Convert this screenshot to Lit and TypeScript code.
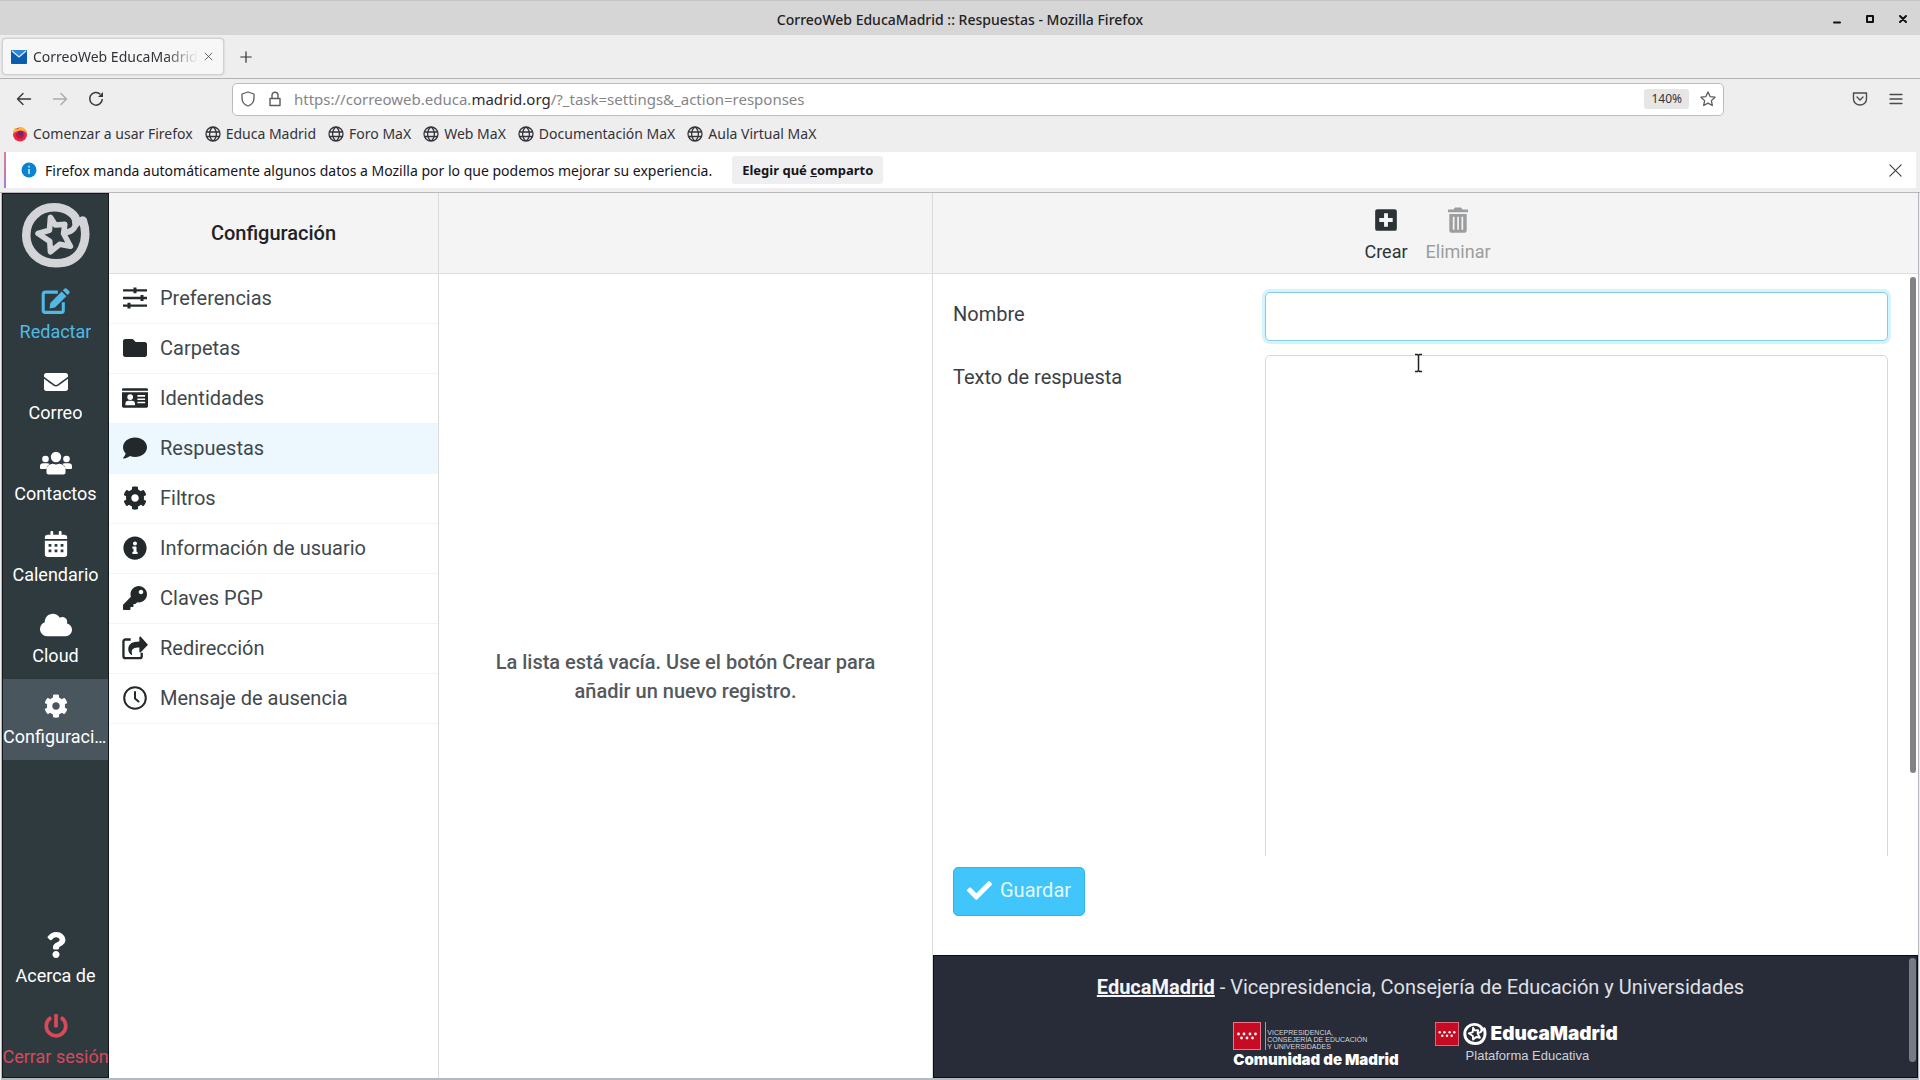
import { LitElement, html, svg, css, type TemplateResult } from "lit";
import { customElement } from "lit/decorators.js";
import { classMap } from "lit/directives/class-map.js";

const solid = (box: string, d: string) =>
  html`<svg viewBox=${box} fill="currentColor" aria-hidden="true"><path fill-rule="evenodd" d=${d}></path></svg>`;
const drawn = (box: string, body: unknown) =>
  html`<svg viewBox=${box} fill="currentColor" aria-hidden="true">${body}</svg>`;
const line = (box: string, d: string, width = 1.5) =>
  html`<svg viewBox=${box} fill="none" stroke="currentColor" stroke-width=${width} stroke-linecap="round" stroke-linejoin="round" aria-hidden="true"><path d=${d}></path></svg>`;

const COG =
  "M487.4 315.7l-42.6-24.6c4.3-23.2 4.3-47 0-70.2l42.6-24.6c4.9-2.8 7.1-8.6 5.5-14-11.1-35.6-30-67.8-54.7-94.6-3.8-4.1-10-5.1-14.8-2.3L380.8 110c-17.9-15.4-38.5-27.3-60.8-35.1V25.8c0-5.6-3.9-10.5-9.4-11.7-36.7-8.2-74.3-7.8-109.2 0-5.5 1.2-9.4 6.1-9.4 11.7V75c-22.2 7.9-42.8 19.8-60.8 35.1L88.7 85.5c-4.9-2.8-11-1.9-14.8 2.3-24.7 26.7-43.6 58.9-54.7 94.6-1.7 5.4.6 11.2 5.5 14L67.3 221c-4.3 23.2-4.3 47 0 70.2l-42.6 24.6c-4.9 2.8-7.1 8.6-5.5 14 11.1 35.6 30 67.8 54.7 94.6 3.8 4.1 10 5.1 14.8 2.3l42.6-24.6c17.9 15.4 38.5 27.3 60.8 35.1v49.2c0 5.6 3.9 10.5 9.4 11.7 36.7 8.2 74.3 7.8 109.2 0 5.5-1.2 9.4-6.1 9.4-11.7v-49.2c22.2-7.9 42.8-19.8 60.8-35.1l42.6 24.6c4.9 2.8 11 1.9 14.8-2.3 24.7-26.7 43.6-58.9 54.7-94.6 1.5-5.5-.7-11.3-5.6-14.1zM256 336c-44.1 0-80-35.9-80-80s35.9-80 80-80 80 35.9 80 80-35.9 80-80 80z";

const icons = {
  cog: solid("0 0 512 512", COG),
  edit: drawn("0 0 24 22", svg`
    <path d="M14 3.5H3.2A1.6 1.6 0 0 0 1.6 5.100V19a1.600 1.600 0 0 0 1.600 1.600H17a1.600 1.600 0 0 0 1.600-1.600V12" fill="none" stroke="currentColor" stroke-width="2.600"></path>
    <path d="M17.200 3l4 4L11.600 16.600l-4.600.700.600-4.700zM18.200 2l1.300-1.300a1.500 1.500 0 0 1 2.100 0l1.900 1.900a1.500 1.500 0 0 1 0 2.100L22.200 6z"></path>`),
  mail: solid("0 0 512 512", "M502.3 190.8c3.9-3.1 9.7-.2 9.7 4.7V400c0 26.5-21.5 48-48 48H48c-26.5 0-48-21.5-48-48V195.6c0-5 5.7-7.8 9.7-4.7 22.4 17.4 52.1 39.5 154.1 113.6 21.1 15.4 56.7 47.8 92.2 47.6 35.7.3 72-32.8 92.3-47.6 102-74.1 131.6-96.3 154-113.7zM256 320c23.2.4 56.600-29.200 73.400-41.400 132.700-96.300 142.800-104.700 173.400-128.700 5.800-4.500 9.200-11.500 9.200-18.900v-19c0-26.500-21.500-48-48-48H48c-26.500 0-48 21.500-48 48v19c0 7.400 3.400 14.300 9.200 18.900 30.600 23.900 40.700 32.400 173.400 128.700 16.800 12.200 50.200 41.800 73.400 41.400z"),
  users: drawn("0 0 32 24", svg`
    <circle cx="5.500" cy="8" r="3.300"></circle><circle cx="26.500" cy="8" r="3.300"></circle>
    <path d="M0 17v-1.500A3.200 3.200 0 0 1 3.200 12.300h4.300c.8 0 1.500.3 2 .7A8 8 0 0 0 6.300 18H1a1 1 0 0 1-1-1zM32 17v-1.500a3.200 3.200 0 0 0-3.200-3.200h-4.300c-.8 0-1.500.3-2 .7A8 8 0 0 1 25.700 18H31a1 1 0 0 0 1-1z"></path>
    <circle cx="16" cy="6" r="5.200"></circle>
    <path d="M6.500 21.500V19a6.300 6.300 0 0 1 6.300-6.300c1.200.6 2.200.8 3.200.8s2-.2 3.200-.8a6.300 6.300 0 0 1 6.300 6.300v2.500a2 2 0 0 1-2 2h-15a2 2 0 0 1-2-2z"></path>`),
  calendar: solid("0 0 24 28", "M0 7a3 3 0 0 1 3-3h3V1a1 1 0 0 1 1-1h1a1 1 0 0 1 1 1v3h6V1a1 1 0 0 1 1-1h1a1 1 0 0 1 1 1v3h3a3 3 0 0 1 3 3v1.500H0zM0 10.500h24V25a3 3 0 0 1-3 3H3a3 3 0 0 1-3-3zM4 14v3h3v-3zM10.500 14v3h3v-3zM17 14v3h3v-3zM4 20v3h3v-3zM10.500 20v3h3v-3zM17 20v3h3v-3z"),
  cloud: solid("0 0 640 512", "M537.6 226.6c4.1-10.7 6.4-22.4 6.4-34.6 0-53-43-96-96-96-19.7 0-38.1 6-53.3 16.2C367 64.2 315.3 32 256 32c-88.4 0-160 71.6-160 160 0 2.700.1 5.400.2 8.100C40.2 219.800 0 273.200 0 336c0 79.500 64.500 144 144 144h368c70.700 0 128-57.300 128-128 0-61.900-44-113.600-102.400-125.400z"),
  question: solid("0 0 384 512", "M202.021 0C122.202 0 70.503 32.703 29.914 91.026c-7.363 10.58-5.093 25.086 5.178 32.874l43.138 32.709c10.373 7.865 25.132 6.026 33.253-4.148 25.049-31.381 43.63-49.449 82.757-49.449 30.764 0 68.816 19.799 68.816 49.631 0 22.552-18.617 34.134-48.993 51.164-35.423 19.86-82.299 44.576-82.299 106.405V320c0 13.255 10.745 24 24 24h72.471c13.255 0 24-10.745 24-24v-5.773c0-42.86 125.268-44.645 125.268-160.627C377.504 66.256 286.902 0 202.021 0zM192 373.459c-38.196 0-69.271 31.075-69.271 69.271 0 38.195 31.075 69.27 69.271 69.27s69.271-31.075 69.271-69.271-31.075-69.27-69.271-69.27z"),
  power: solid("0 0 512 512", "M400 54.1c63 45 104 118.6 104 201.9 0 136.8-110.8 247.7-247.5 248C120 504.3 8.2 393 8 256.4 7.9 173.1 48.9 99.3 111.8 54.2c11.7-8.3 28-4.8 35 7.7L162.6 90c5.9 10.5 3.1 23.8-6.6 31-41.5 30.8-68 79.6-68 134.9-.1 92.3 74.5 168.1 168 168.1 91.6 0 168.6-74.2 168-169.1-.3-51.8-24.7-101.8-68.1-134-9.7-7.2-12.4-20.5-6.5-30.9l15.8-28.1c7-12.4 23.2-16.1 34.8-7.8zM296 264V24c0-13.3-10.7-24-24-24h-32c-13.3 0-24 10.7-24 24v240c0 13.3 10.7 24 24 24h32c13.3 0 24-10.700 24-24z"),
  sliders: drawn("0 0 24 24", svg`<path d="M0 3.200h24v2.400H0zM0 10.800h24v2.400H0zM0 18.400h24v2.400H0z"></path>
    <path d="M10.500 1.500h3v5.800h-3zM17.500 9.100h3v5.800h-3zM4.500 16.700h3v5.800h-3z"></path>`),
  folder: solid("0 0 512 512", "M464 128H272l-64-64H48C21.5 64 0 85.5 0 112v288c0 26.5 21.5 48 48 48h416c26.5 0 48-21.5 48-48V176c0-26.5-21.5-48-48-48z"),
  idcard: drawn("0 0 27 24", svg`<path fill-rule="evenodd" d="M1.500 2h24A1.500 1.500 0 0 1 27 3.500V4.500H0V3.500A1.500 1.500 0 0 1 1.500 2zM0 6h27v14.500a1.500 1.500 0 0 1-1.500 1.500h-24A1.500 1.500 0 0 1 0 20.500zM8.500 8a3 3 0 1 0 0 6 3 3 0 0 0 0-6zM3.500 19.500h10v-1.300a3.300 3.300 0 0 0-3.300-3.300H6.800a3.300 3.300 0 0 0-3.300 3.300zM16 9v1.700h8V9zM16 12.400v1.700h8v-1.700zM16 15.800v1.700h8v-1.700z"></path>`),
  comment: solid("0 0 512 512", "M256 32C114.6 32 0 125.1 0 240c0 49.6 21.4 95 57 130.7C44.5 421.1 2.7 466 2.2 466.5c-2.2 2.3-2.8 5.7-1.5 8.7S4.8 480 8 480c66.3 0 116-31.8 140.6-51.4 32.7 12.3 69 19.4 107.4 19.4 141.4 0 256-93.1 256-208S397.4 32 256 32z"),
  info: solid("0 0 512 512", "M256 8C119.043 8 8 119.083 8 256c0 136.997 111.043 248 248 248s248-111.003 248-248C504 119.083 392.957 8 256 8zm0 110c23.196 0 42 18.804 42 42s-18.804 42-42 42-42-18.804-42-42 18.804-42 42-42zm56 254c0 6.627-5.373 12-12 12h-88c-6.627 0-12-5.373-12-12v-24c0-6.627 5.373-12 12-12h12v-64h-12c-6.627 0-12-5.373-12-12v-24c0-6.627 5.373-12 12-12h64c6.627 0 12 5.373 12 12v100h12c6.627 0 12 5.373 12 12v24z"),
  key: solid("0 0 512 512", "M512 176.001C512 273.203 433.202 352 336 352c-11.22 0-22.19-1.062-32.827-3.069l-24.012 27.014A23.999 23.999 0 0 1 261.223 384H224v40c0 13.255-10.745 24-24 24h-40v40c0 13.255-10.745 24-24 24H24c-13.255 0-24-10.745-24-24v-78.059c0-6.365 2.529-12.47 7.029-16.971l161.802-161.802C163.108 213.814 160 195.271 160 176 160 78.798 238.797.001 335.999 0 433.488-.001 512 78.511 512 176.001zM336 128c0 26.51 21.49 48 48 48s48-21.49 48-48-21.49-48-48-48-48 21.49-48 48z"),
  share: drawn("0 0 27 24", svg`<path d="M9 3.200H3.500A2 2 0 0 0 1.500 5.200v15.300a2 2 0 0 0 2 2h15a2 2 0 0 0 2-2V17" fill="none" stroke="currentColor" stroke-width="2.400"></path>
    <path d="M18 .8v4.400c-7 .2-11.500 2.200-11.500 8.300 0 2.300 1.300 4.300 3 5.600.5.400 1.200 0 1-.700-1.500-5.400 1.500-6.700 7.500-6.800v4.300c0 .8 1 1.200 1.500.6l7-7.300a.9.900 0 0 0 0-1.200l-7-7.700c-.5-.6-1.500-.3-1.500.5z"></path>`),
  clock: line("0 0 24 24", "M12 1.200a10.800 10.800 0 1 0 0 21.600 10.800 10.800 0 0 0 0-21.600zM12 6v6.500l3.500 3", 2),
  plus: solid("0 0 20 24", "M2 2h16a2 2 0 0 1 2 2v16a2 2 0 0 1-2 2H2a2 2 0 0 1-2-2V4a2 2 0 0 1 2-2zM8.200 5.800v4.400H3.800v3.600h4.400v4.400h3.600v-4.400h4.400v-3.600h-4.400V5.800z"),
  trash: solid("0 0 20 26", "M0 2.500h5.500L7 .5h6l1.500 2H20v2.700H0zM1.300 7h17.400v16.500A2.200 2.200 0 0 1 16.500 25.700h-13a2.200 2.200 0 0 1-2.200-2.200zM4.800 9.800v13h1.700v-13zM9.200 9.800v13h1.700v-13zM13.500 9.800v13h1.700v-13z"),
  check: solid("0 0 512 512", "M173.898 439.404l-166.4-166.4c-9.997-9.997-9.997-26.206 0-36.204l36.203-36.204c9.997-9.998 26.207-9.998 36.204 0L192 312.69 432.095 72.596c9.997-9.997 26.207-9.997 36.204 0l36.203 36.204c9.997 9.997 9.997 26.206 0 36.204l-294.4 294.401c-9.998 9.997-26.207 9.997-36.204-.001z"),
  swirl: html`<svg viewBox="60 35 214 204" fill="none" stroke="currentColor" stroke-linecap="round" stroke-linejoin="round" aria-hidden="true">
    <path stroke-width="26" d="M249 91C268 146 250 222 167 222C112 222 76 182 76 136C76 86 115 51 160 51C202 51 232 76 229 98"></path>
    <path stroke-width="18" d="M229 92C229 110 218 124 200 127"></path>
    <path stroke-width="17" d="M150 81L165 105L194 103L190 131L211 170L178 164L150 187L148 155L112 131L147 121Z"></path></svg>`,
  back: line("0 0 16 16", "M14.500 8H1.500M7 2.500L1.500 8L7 13.500", 1.4),
  forward: line("0 0 16 16", "M1.500 8H14.500M9 2.500L14.500 8L9 13.500", 1.4),
  reload: drawn("0 0 16 16", svg`<path d="M12.300 3.200A6.300 6.300 0 1 0 14.300 8" fill="none" stroke="currentColor" stroke-width="1.500"></path><path d="M15 1v5h-5z"></path>`),
  shield: line("0 0 16 16", "M8 1L14 3V7C14 11 11.500 13.800 8 15C4.500 13.800 2 11 2 7V3Z", 1.3),
  lock: line("0 0 16 16", "M3 7.500H13V14.500H3ZM5 7.500V4.200A3 3 0 0 1 11 4.200V7.500", 1.4),
  star: line("0 0 16 16", "M8 1L10.100 5.600L15 6.200L11.400 9.600L12.300 14.500L8 12.100L3.700 14.500L4.600 9.600L1 6.200L5.900 5.600Z", 1.3),
  pocket: line("0 0 16 16", "M1.500 2H14.500V8A6.500 6 0 0 1 1.500 8ZM5 6L8 9L11 6", 1.4),
  menu: line("0 0 16 16", "M2 3.500H14M2 8H14M2 12.500H14", 1.3),
  plusThin: line("0 0 16 16", "M8 2V14M2 8H14", 1.4),
  cross: line("0 0 16 16", "M2 2L14 14M14 2L2 14", 1.3),
  globe: line("0 0 16 16", "M8 1A7 7 0 1 0 8 15A7 7 0 0 0 8 1ZM8 1C3.500 4 3.500 12 8 15M8 1C12.500 4 12.500 12 8 15M1.500 6H14.500M1.500 10.500H14.500", 1.3),
  firefox: html`<svg viewBox="0 0 16 16" aria-hidden="true"><circle cx="8" cy="8.500" r="7" fill="#e8293f"></circle><path d="M1 8C1 5 2 3 3.500 1.500L5 3.500C6 2.300 8 1.300 9.500 1c3.300 1 5.500 4 5.500 7-1.500-2.500-3.500-3.500-6.500-3.500S3 6 1 8z" fill="#ffb53a"></path><circle cx="8.500" cy="8" r="3" fill="#6a2585"></circle><path d="M4 7c2 .3 3 2.500 5 2.500 1.200 0 2-.5 2.500-1.500.8 3-1 4.800-3.500 4.800S4 11 4 7z" fill="#c9123f"></path></svg>`,
  favicon: html`<svg viewBox="0 0 16 14" aria-hidden="true"><rect width="16" height="14" rx="1" fill="#0b5cad"></rect><path d="M0 0H16L8 7Z" fill="#2f86d6"></path><path d="M1 1L8 7L15 1" fill="none" stroke="#d5eaff" stroke-width="1.300"></path></svg>`,
  infoBlue: html`<svg viewBox="0 0 16 16" aria-hidden="true"><circle cx="8" cy="8" r="7.500" fill="#0a84d0"></circle><path d="M8 7v5M8 3.800v1.600" stroke="#bfe4ff" stroke-width="1.700"></path></svg>`,
};

const flag = html`<svg viewBox="0 0 28 28" aria-hidden="true"><rect x=".5" y=".5" width="27" height="27" fill="#c60b22" stroke="#e8788a"></rect>
  <g fill="#fff"><circle cx="5.500" cy="12" r="1.400"></circle><circle cx="11" cy="12" r="1.400"></circle><circle cx="17" cy="12" r="1.400"></circle><circle cx="22.500" cy="12" r="1.400"></circle><circle cx="8.500" cy="16" r="1.400"></circle><circle cx="14" cy="16" r="1.400"></circle><circle cx="19.500" cy="16" r="1.400"></circle></g></svg>`;

interface Entry {
  label: string;
  icon: TemplateResult;
  kind?: string;
}

const tasks: Entry[] = [
  { label: "Redactar", icon: icons.edit, kind: "compose" },
  { label: "Correo", icon: icons.mail },
  { label: "Contactos", icon: icons.users, kind: "wide" },
  { label: "Calendario", icon: icons.calendar },
  { label: "Cloud", icon: icons.cloud, kind: "wide" },
  { label: "Configuración", icon: icons.cog, kind: "selected" },
];
const tail: Entry[] = [
  { label: "Acerca de", icon: icons.question },
  { label: "Cerrar sesión", icon: icons.power, kind: "logout" },
];
const sections: Entry[] = [
  { label: "Preferencias", icon: icons.sliders },
  { label: "Carpetas", icon: icons.folder },
  { label: "Identidades", icon: icons.idcard },
  { label: "Respuestas", icon: icons.comment, kind: "selected" },
  { label: "Filtros", icon: icons.cog },
  { label: "Información de usuario", icon: icons.info },
  { label: "Claves PGP", icon: icons.key },
  { label: "Redirección", icon: icons.share },
  { label: "Mensaje de ausencia", icon: icons.clock },
];
const bookmarks: Entry[] = [
  { label: "Comenzar a usar Firefox", icon: icons.firefox },
  { label: "Educa Madrid", icon: icons.globe },
  { label: "Foro MaX", icon: icons.globe },
  { label: "Web MaX", icon: icons.globe },
  { label: "Documentación MaX", icon: icons.globe },
  { label: "Aula Virtual MaX", icon: icons.globe },
];

const base = css`
  * { box-sizing: border-box; }
  button, input, textarea { font: inherit; color: inherit; margin: 0; }
  button { border: 0; background: none; padding: 0; display: flex; align-items: center; justify-content: center; }
  a { color: inherit; text-decoration: none; }
  svg { display: block; flex: none; }
`;

@customElement("browser-chrome")
class BrowserChrome extends LitElement {
  static styles = [base, css`
    :host { display: block; flex: none; font-family: "Noto Sans", "Open Sans", sans-serif; font-size: 14px; color: #33333a; background: #efeeee; }
    .titlebar { display: grid; grid-template-columns: 1fr auto 1fr; align-items: center; height: 35px; padding: 2px 10px 0; background: #d6d6d6; border-top: 1px solid #c4c4c4; font-weight: 500; color: #222; }
    .title { grid-column: 2; }
    .window { display: flex; justify-content: flex-end; gap: 19px; color: #111; }
    .window svg { width: 14px; height: 14px; }
    .tabs { display: flex; align-items: center; gap: 8px; height: 44px; padding: 3px 2px; border-bottom: 1px solid #b2b2b4; }
    .tab { display: flex; align-items: center; gap: 6px; width: 222px; height: 37px; padding: 0 10px 0 8px; border: 1px solid #d2d2d4; border-radius: 4px; background: #f7f7f7; box-shadow: 0 0 2px #bbb; }
    .tab svg { width: 16px; height: 14px; }
    .tabname { flex: 1; overflow: hidden; white-space: nowrap; mask-image: linear-gradient(90deg, #000 80%, transparent); }
    .tab button svg { width: 9px; height: 9px; }
    .add { width: 28px; height: 28px; }
    .add svg { width: 14px; height: 14px; }
    .toolbar { display: flex; align-items: center; height: 40px; padding: 0 16px; }
    .buttons { display: flex; gap: 20px; width: 216px; color: #38383d; }
    .buttons svg, .extras svg { width: 16px; height: 16px; }
    .dim { color: #aaaaae; }
    .url { display: flex; align-items: center; gap: 11px; flex: 1; height: 33px; padding: 0 7px; border: 1px solid #bcbcc0; border-radius: 5px; background: #fff; color: #5b5b62; }
    .url svg { width: 16px; height: 16px; }
    .address { flex: 1; color: #85858a; white-space: nowrap; font-size: 15px; }
    .address b { font-weight: 400; color: #2b2b30; }
    .zoom { padding: 0 7px; background: #e6e6e7; font-size: 12px; line-height: 20px; border-radius: 3px; color: #33333a; }
    .extras { display: flex; justify-content: flex-end; gap: 20px; width: 180px; color: #4b4b50; }
    .bookmarks { display: flex; align-items: center; gap: 12px; height: 33px; padding: 0 12px 4px; white-space: nowrap; }
    .bookmarks a { display: flex; align-items: center; gap: 5px; }
    .bookmarks svg { width: 16px; height: 16px; }
    .notice { display: flex; align-items: center; height: 36px; margin: 0 4px; padding: 0 13px 0 15px; background: #fff; border-left: 2px solid; border-image: linear-gradient(#e07aa0, #a77ad0) 1; color: #15141a; }
    .notice > svg { width: 16px; height: 16px; margin-right: 8px; }
    .choose { height: 28px; margin-left: 20px; padding: 0 10px; background: #efeff1; border-radius: 3px; font-weight: 700; font-size: 13px; }
    .dismiss { margin-left: auto; color: #444; }
    .dismiss svg { width: 15px; height: 15px; }
    .edge { height: 5px; border-bottom: 1px solid #b9b9bc; }
  `];

  render() {
    return html`
      <header class="titlebar">
        <span class="title">CorreoWeb EducaMadrid :: Respuestas - Mozilla Firefox</span>
        <div class="window">
          <button aria-label="Minimizar">${line("0 0 14 14", "M4 10.500H10", 2)}</button>
          <button aria-label="Maximizar">${line("0 0 14 14", "M4 4H10V10H4Z", 2)}</button>
          <button aria-label="Cerrar">${line("0 0 14 14", "M4 4L10 10M10 4L4 10", 2)}</button>
        </div>
      </header>
      <div class="tabs">
        <div class="tab">${icons.favicon}<span class="tabname">CorreoWeb EducaMadrid</span>
          <button aria-label="Cerrar pestaña">${icons.cross}</button></div>
        <button class="add" aria-label="Nueva pestaña">${icons.plusThin}</button>
      </div>
      <nav class="toolbar">
        <div class="buttons">
          <button aria-label="Atrás">${icons.back}</button>
          <button class="dim" aria-label="Adelante">${icons.forward}</button>
          <button aria-label="Recargar">${icons.reload}</button>
        </div>
        <div class="url">${icons.shield}${icons.lock}
          <span class="address">https://correoweb.educa.<b>madrid.org</b>/?_task=settings&amp;_action=responses</span>
          <button class="zoom">140%</button>
          <button aria-label="Añadir a marcadores">${icons.star}</button>
        </div>
        <div class="extras">
          <button aria-label="Guardar en Pocket">${icons.pocket}</button>
          <button aria-label="Menú">${icons.menu}</button>
        </div>
      </nav>
      <nav class="bookmarks">${bookmarks.map((b) => html`<a href="#">${b.icon}<span>${b.label}</span></a>`)}</nav>
      <div class="notice">${icons.infoBlue}
        <span>Firefox manda automáticamente algunos datos a Mozilla por lo que podemos mejorar su experiencia.</span>
        <button class="choose"><span>Elegir qué <u>c</u>omparto</span></button>
        <button class="dismiss" aria-label="Descartar">${icons.cross}</button>
      </div>
      <div class="edge"></div>`;
  }
}

@customElement("task-menu")
class TaskMenu extends LitElement {
  static styles = [base, css`
    :host { display: flex; flex-direction: column; min-width: 0; background: #2f3a3f; border: 1px solid #10181b; color: #fff; font-size: 18px; }
    .logo { display: flex; justify-content: center; align-items: center; height: 80px; padding-top: 3px; color: #d2d4d8; }
    .logo svg { width: 70px; height: 67px; }
    .item { display: flex; flex-direction: column; align-items: center; height: 81px; padding-top: 14px; }
    .item svg { width: 24px; height: 26px; }
    .wide svg { width: 32px; }
    .compose svg { width: 29px; }
    .label { max-width: 100%; margin-top: 6px; line-height: 24px; overflow: hidden; text-overflow: ellipsis; white-space: nowrap; }
    .compose { color: #4fb9e8; }
    .selected { background: #4a565d; }
    .logout { height: 78px; color: #d8495c; }
    .logout .label { max-width: none; overflow: visible; }
    .spacer { flex: 1; }
  `];

  private item(entry: Entry) {
    return html`<a href="#" class="item ${entry.kind ?? ""}">${entry.icon}<span class="label">${entry.label}</span></a>`;
  }

  render() {
    return html`<div class="logo">${icons.swirl}</div>
      ${tasks.map((t) => this.item(t))}
      <div class="spacer"></div>
      ${tail.map((t) => this.item(t))}`;
  }
}

@customElement("settings-list")
class SettingsList extends LitElement {
  static styles = [base, css`
    :host { display: block; border-right: 1px solid #d9dbdd; background: #fff; color: #41484c; font-size: 20px; }
    .head { display: flex; align-items: center; justify-content: center; height: 81px; background: #f4f4f4; border-bottom: 1px solid #dcdee0; font-weight: 500; color: #1e2326; margin: 0; font-size: 20px; }
    .row { display: flex; align-items: center; gap: 11px; height: 50px; padding: 0 12px 2px; border-bottom: 1px solid #f3f4f5; }
    .glyph { display: flex; justify-content: center; width: 28px; color: #23292b; }
    .glyph svg { width: 26px; height: 24px; }
    .selected { background: #ecf8fd; }
  `];

  render() {
    return html`<h2 class="head">Configuración</h2>
      <nav>${sections.map((s) => html`<a href="#" class=${classMap({ row: true, selected: s.kind === "selected" })}>
        <span class="glyph">${s.icon}</span><span>${s.label}</span></a>`)}</nav>`;
  }
}

@customElement("response-editor")
class ResponseEditor extends LitElement {
  static styles = [base, css`
    :host { display: flex; flex-direction: column; min-width: 0; min-height: 0; color: #3a4145; font-size: 20px; }
    .tools { display: flex; justify-content: center; gap: 18px; height: 81px; flex: none; padding-top: 14px; padding-left: 4px; background: #f4f4f4; border-bottom: 1px solid #dcdee0; font-size: 18px; color: #2c3336; }
    .tool { flex-direction: column; justify-content: flex-start; gap: 7px; line-height: 24px; }
    .tool svg { width: 24px; height: 26px; }
    .tool:disabled { color: #9b9d9f; }
    .area { position: relative; flex: 1; min-height: 0; overflow: hidden; padding: 18px 30px 0 20px; }
    .field { display: grid; grid-template-columns: 1fr 2fr; margin-bottom: 14px; }
    .field label { padding-top: 10px; line-height: 24px; }
    .field input, .field textarea { display: block; width: 100%; height: 49px; padding: 8px 12px; border: 1px solid #d5d8da; border-radius: 5px; background: #fff; outline: none; resize: none; }
    .field input { border-color: #86cbe6; box-shadow: 0 0 0 3px #d3f3fd; }
    .field textarea { height: 700px; }
    .thumb { position: absolute; top: 3px; right: 2px; width: 6px; height: 496px; border-radius: 3px; background: #828284; }
    .caret { position: absolute; left: 481px; top: 79px; width: 9px; height: 20px; }
    .actions { flex: none; height: 99px; padding: 11px 20px 0; }
    .save { gap: 8px; height: 49px; padding: 0 13px 3px; border: 1px solid #35b3e8; border-radius: 5px; background: #41c6fb; color: #e2f8ff; }
    .save svg { width: 25px; height: 25px; color: #fff; }
    footer { position: relative; flex: none; height: 123px; padding-top: 19px; background: #282b38; border: 1px solid #0c0d14; color: #dfe1e6; text-align: center; }
    footer p { margin: 0; padding-right: 10px; line-height: 24px; }
    footer p a { font-weight: 700; text-decoration: underline; color: #f4f5f7; }
    .logos { display: flex; justify-content: center; gap: 36px; padding-top: 23px; color: #fff; font-family: "Liberation Sans", Arial, sans-serif; white-space: nowrap; text-align: left; }
    .brand { display: flex; gap: 4px; align-items: center; }
    .region .brand svg { width: 28px; height: 28px; }
    .tiny { border-left: 1px solid #9a9cab; padding-left: 1px; font-size: 7px; line-height: 7px; padding-top: 7px; color: #d5d7dd; }
    .name { font: 900 15px/20px Inter, "Liberation Sans", sans-serif; }
    .edu { font: 900 19px/24px Inter, "Liberation Sans", sans-serif; }
    .platform .brand svg { width: 24px; height: 24px; }
    .sub { padding-left: 31px; font-size: 13px; line-height: 20px; color: #cfd1d8; }
    .footthumb { position: absolute; top: 2px; right: 1px; width: 7px; height: 104px; border-radius: 4px; background: #787a85; }
  `];

  render() {
    return html`
      <div class="tools">
        <button class="tool">${icons.plus}<span>Crear</span></button>
        <button class="tool" disabled>${icons.trash}<span>Eliminar</span></button>
      </div>
      <form class="area">
        <div class="field"><label for="name">Nombre</label><input id="name" type="text"></div>
        <div class="field"><label for="text">Texto de respuesta</label><textarea id="text"></textarea></div>
        <div class="thumb"></div>
        <svg class="caret" viewBox="0 0 9 20" fill="none" stroke="#222" stroke-width="1.500" aria-hidden="true"><path d="M1 1.500H3.500L4.500 2.500L5.500 1.500H8M1 18.500H3.500L4.500 17.500L5.500 18.500H8M4.500 2.500V17.500"></path></svg>
      </form>
      <div class="actions"><button class="save">${icons.check}<span>Guardar</span></button></div>
      <footer>
        <p><a href="#">EducaMadrid</a> - Vicepresidencia, Consejería de Educación y Universidades</p>
        <div class="logos">
          <div class="region">
            <div class="brand">${flag}<div class="tiny">VICEPRESIDENCIA,<br>CONSEJERÍA DE EDUCACIÓN<br>Y UNIVERSIDADES</div></div>
            <div class="name">Comunidad de Madrid</div>
          </div>
          <div class="platform">
            <div class="brand">${flag}${icons.swirl}<span class="edu">EducaMadrid</span></div>
            <div class="sub">Plataforma Educativa</div>
          </div>
        </div>
        <div class="footthumb"></div>
      </footer>`;
  }
}

@customElement("app-root")
class AppRoot extends LitElement {
  static styles = [base, css`
    :host { display: flex; flex-direction: column; height: 100vh; min-height: 1000px; overflow: hidden; background: #efeeee; font-family: Roboto, "Liberation Sans", sans-serif; }
    main { flex: 1; min-height: 0; display: grid; grid-template-columns: 107px 330px 494px minmax(0, 1fr); grid-template-rows: minmax(0, 1fr); margin: 0 1px; border: 1px solid #b4b8bf; border-top: 0; border-bottom-width: 2px; background: #fff; }
    .records { display: flex; flex-direction: column; border-right: 1px solid #d9dbdd; }
    .bar { height: 81px; background: #f4f4f4; border-bottom: 1px solid #dcdee0; }
    .empty { flex: 1; display: flex; align-items: center; justify-content: center; margin: 0; padding: 2px 50px 0; text-align: center; font-weight: 500; font-size: 20px; line-height: 29px; color: #55595c; }
  `];

  render() {
    return html`<browser-chrome></browser-chrome>
      <main>
        <task-menu></task-menu>
        <settings-list></settings-list>
        <section class="records"><div class="bar"></div>
          <p class="empty">La lista está vacía. Use el botón Crear para añadir un nuevo registro.</p></section>
        <response-editor></response-editor>
      </main>`;
  }
}
